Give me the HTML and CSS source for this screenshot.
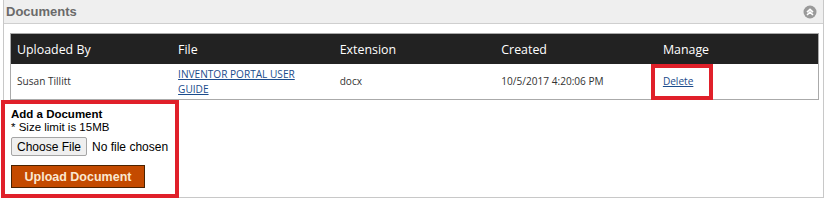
FILE: index.html
```html
<!DOCTYPE html>
<html>
<head>
<meta charset="utf-8">
<link rel="stylesheet" href="styles.css">
</head>
<body>
<div class="panel">
  <div class="panel-head">
    <span class="panel-title">Documents</span>
    <svg class="collapse" width="14" height="14" viewBox="0 0 14 14">
      <circle cx="7" cy="7" r="6.5" fill="#9a9a9a"/>
      <path d="M4 7.2 L7 4.4 L10 7.2 M4 10 L7 7.2 L10 10" fill="none" stroke="#fff" stroke-width="1.6"/>
    </svg>
  </div>
  <div class="panel-body">
    <table class="docs">
      <thead>
        <tr><th>Uploaded By</th><th>File</th><th>Extension</th><th>Created</th><th>Manage</th></tr>
      </thead>
      <tbody>
        <tr>
          <td>Susan Tillitt</td>
          <td><a href="#">INVENTOR PORTAL USER GUIDE</a></td>
          <td>docx</td>
          <td>10/5/2017 4:20:06 PM</td>
          <td class="manage"><a href="#">Delete</a><span class="mark"></span></td>
        </tr>
      </tbody>
    </table>
    <div class="add-doc">
      <div class="add-title">Add a Document</div>
      <div class="add-note">* Size limit is 15MB</div>
      <div class="file-row"><button class="choose">Choose File</button><span class="nofile">No file chosen</span></div>
      <button class="upload">Upload Document</button>
    </div>
  </div>
</div>
</body>
</html>
```

FILE: styles.css
```css
html, body { margin: 0; padding: 0; background: #fff; }
body { width: 827px; height: 200px; overflow: hidden; }
.panel {
  margin: 0 3px 0 3px;
  height: 198px;
  box-sizing: border-box;
  border: 1px solid #c8c8c8;
  border-top: none;
}
.panel-head {
  height: 24px;
  box-sizing: border-box;
  background: #efefef;
  border-bottom: 1px solid #cfcfcf;
  display: flex;
  align-items: center;
  justify-content: space-between;
  padding: 0 6px 0 2px;
}
.panel-title {
  font-family: "Liberation Sans", Arial, sans-serif;
  font-weight: bold;
  font-size: 13px;
  color: #6a6a6a;
}
.collapse { display: block; margin-top: 1px; }
.panel-body { padding: 9px 5px 0 6px; position: relative; }
.docs {
  width: 809px;
  border-collapse: collapse;
  table-layout: fixed;
  border: 1px solid #aaa;
  font-family: "Open Sans", "Noto Sans", sans-serif;
}
.docs th {
  background: #222;
  color: #fff;
  font-weight: normal;
  font-size: 12.4px;
  text-align: left;
  height: 30px;
  padding: 0 6px;
}
.docs td {
  font-size: 10.1px;
  color: #333;
  height: 35px;
  padding: 0 6px;
  vertical-align: middle;
  line-height: 15px;
}
.docs a { color: #1b4c8c; }
.manage { position: relative; }
.mark {
  position: absolute;
  left: -6px;
  top: 0;
  width: 62px;
  height: 36px;
  box-sizing: border-box;
  border: 4px solid #e0202a;
}
.add-doc {
  margin-left: -9px;
  margin-top: 0;
  width: 178px;
  height: 98px;
  box-sizing: border-box;
  border: 4px solid #e0202a;
  padding: 3px 0 0 6px;
  font-family: "Liberation Sans", Arial, sans-serif;
  font-size: 11.5px;
  color: #000;
}
.add-title { font-weight: bold; line-height: 14px; }
.add-note { line-height: 13px; }
.file-row { display: flex; align-items: center; margin-top: 3px; }
.choose {
  font-family: "Liberation Sans", Arial, sans-serif;
  font-size: 12px;
  height: 19px;
  padding: 0 5px;
  background: #efefef;
  border: 1px solid #a5a5a5;
  border-radius: 2px;
  color: #000;
}
.nofile { margin-left: 5px; font-size: 12px; }
.upload {
  display: block;
  margin-top: 9px;
  width: 134px;
  height: 23px;
  background: #c44a00;
  border: 1px solid #4a2200;
  color: #fbe8d0;
  font-family: "Liberation Sans", Arial, sans-serif;
  font-weight: bold;
  font-size: 12.5px;
  padding: 0;
}
```
